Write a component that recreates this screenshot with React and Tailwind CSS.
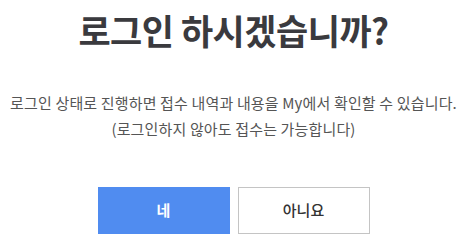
export default function App() {
  return (
    <div
      className="w-[467px] h-[248px] bg-white flex flex-col items-center"
      style={{ fontFamily: '"Noto Sans CJK KR", "Noto Sans", sans-serif' }}
    >
      <h1 className="mt-[6px] text-[35px] leading-[48px] font-bold text-[#3a3a3e] tracking-[-0.5px]">
        로그인 하시겠습니까?
      </h1>
      <div className="mt-[36px] text-center text-[15px] leading-[26px] text-[#555] tracking-[0.15px]">
        <p>로그인 상태로 진행하면 접수 내역과 내용을 My에서 확인할 수 있습니다.</p>
        <p>(로그인하지 않아도 접수는 가능합니다)</p>
      </div>
      <div className="mt-[45px] flex gap-2">
        <button className="w-[132px] h-[47px] bg-[#508cf0] text-white text-[15px] font-bold">
          네
        </button>
        <button className="w-[132px] h-[47px] bg-white border border-[#c4c4c4] text-[#333] text-[15px] font-medium">
          아니요
        </button>
      </div>
    </div>
  );
}
